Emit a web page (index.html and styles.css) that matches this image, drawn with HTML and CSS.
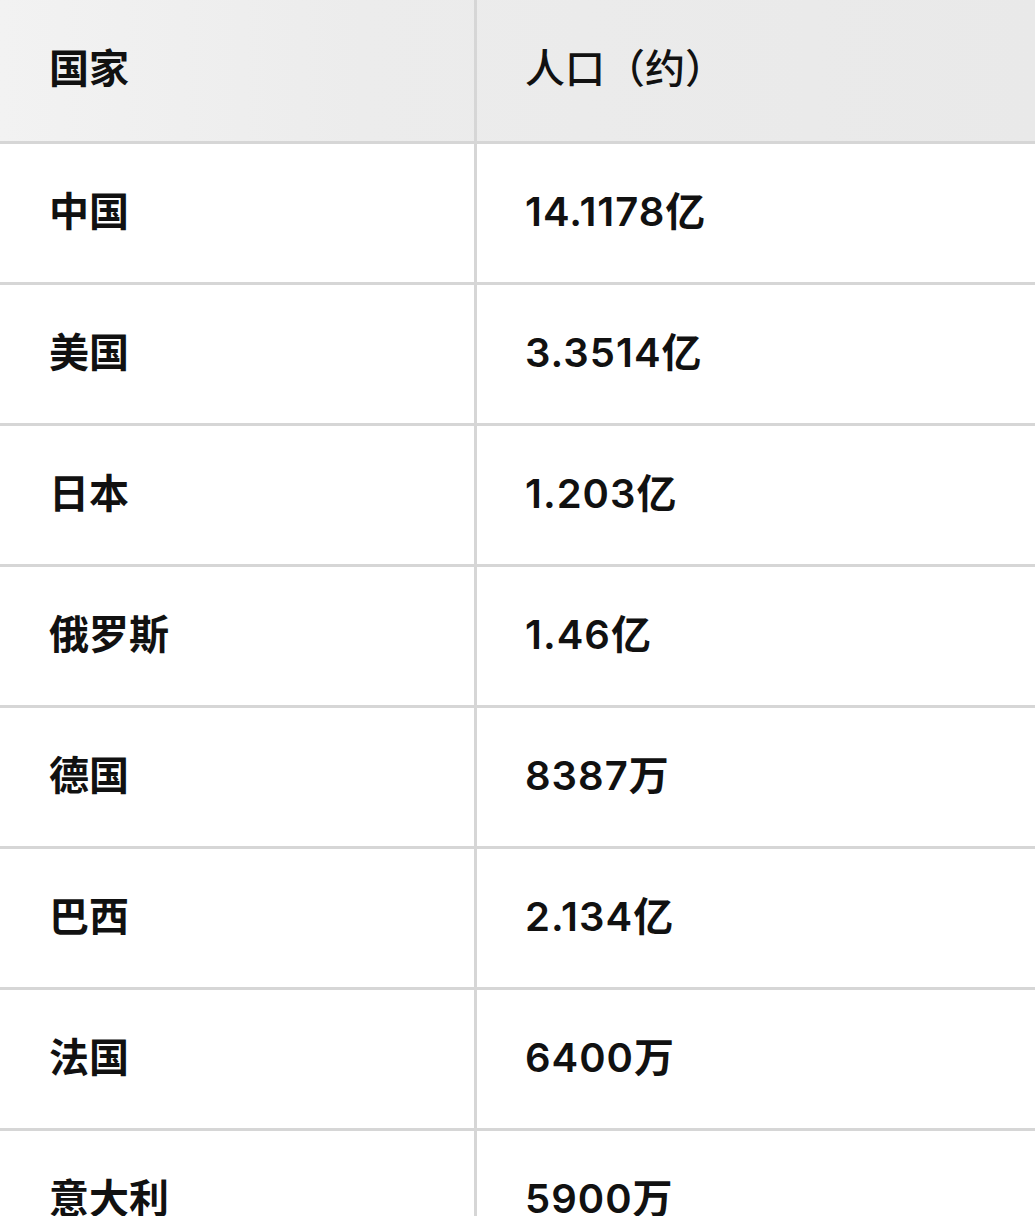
FILE: index.html
```html
<!DOCTYPE html>
<html lang="zh">
<head>
<meta charset="utf-8">
<link rel="stylesheet" href="styles.css">
</head>
<body>
<div class="table">
  <div class="row head">
    <div class="cell c1">国家</div>
    <div class="cell c2">人口（约）</div>
  </div>
  <div class="row"><div class="cell c1">中国</div><div class="cell c2">14.1178亿</div></div>
  <div class="row"><div class="cell c1">美国</div><div class="cell c2">3.3514亿</div></div>
  <div class="row"><div class="cell c1">日本</div><div class="cell c2">1.203亿</div></div>
  <div class="row"><div class="cell c1">俄罗斯</div><div class="cell c2">1.46亿</div></div>
  <div class="row"><div class="cell c1">德国</div><div class="cell c2">8387万</div></div>
  <div class="row"><div class="cell c1">巴西</div><div class="cell c2">2.134亿</div></div>
  <div class="row"><div class="cell c1">法国</div><div class="cell c2">6400万</div></div>
  <div class="row"><div class="cell c1">意大利</div><div class="cell c2">5900万</div></div>
</div>
</body>
</html>
```
FILE: styles.css
```css
html, body {
  margin: 0;
  padding: 0;
  background: #ffffff;
}
body {
  width: 1035px;
  height: 1216px;
  overflow: hidden;
  font-family: "Inter", "Noto Sans CJK SC", sans-serif;
  color: #111111;
}
.table {
  display: flex;
  flex-direction: column;
  width: 1035px;
}
.row {
  display: grid;
  grid-template-columns: 477px 1fr;
  height: 138px;
  border-bottom: 3px solid #d6d6d6;
}
.row.head {
  height: 141px;
  background: linear-gradient(90deg, #f2f2f2 0%, #ececec 35%, #e9e9e9 100%);
}
.cell {
  display: flex;
  align-items: center;
  padding-bottom: 3px;
  font-size: 40px;
  font-weight: 700;
  line-height: 1;
}
.c1 {
  padding-left: 49px;
  border-right: 3px solid #d6d6d6;
}
.c2 {
  padding-left: 48px;
  font-weight: 600;
  letter-spacing: 1px;
}
.head .cell {
  font-weight: 500;
  letter-spacing: 0;
}
.head .c1 {
  font-weight: 700;
}
```
